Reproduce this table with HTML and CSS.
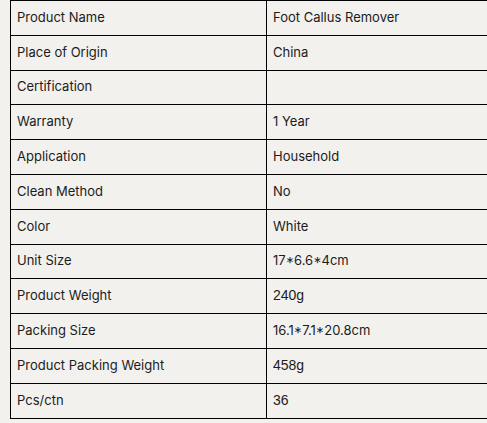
FILE: index.html
```html
<!DOCTYPE html>
<html lang="en">
<head>
<meta charset="utf-8">
<title>Product Specifications</title>
<link rel="stylesheet" href="styles.css">
</head>
<body>
<table class="spec">
  <colgroup>
    <col class="col-key">
    <col class="col-val">
  </colgroup>
  <tbody>
    <tr><td class="key">Product Name</td><td class="val">Foot Callus Remover</td></tr>
    <tr><td class="key">Place of Origin</td><td class="val">China</td></tr>
    <tr><td class="key">Certification</td><td class="val"></td></tr>
    <tr><td class="key">Warranty</td><td class="val">1 Year</td></tr>
    <tr><td class="key">Application</td><td class="val">Household</td></tr>
    <tr><td class="key">Clean Method</td><td class="val">No</td></tr>
    <tr><td class="key">Color</td><td class="val">White</td></tr>
    <tr><td class="key">Unit Size</td><td class="val">17*6.6*4cm</td></tr>
    <tr><td class="key">Product Weight</td><td class="val"><span class="plain">240g</span></td></tr>
    <tr><td class="key">Packing Size</td><td class="val">16.1*7.1*20.8cm</td></tr>
    <tr><td class="key">Product Packing Weight</td><td class="val"><span class="plain">458g</span></td></tr>
    <tr><td class="key">Pcs/ctn</td><td class="val"><span class="plain">36</span></td></tr>
  </tbody>
</table>
</body>
</html>
```
FILE: styles.css
```css
html, body {
  margin: 0;
  padding: 0;
  overflow: hidden;
  background: #f2f1ee;
}

body {
  padding-left: 10px;
  font-family: "Inter", "Liberation Sans", sans-serif;
  font-size: 13px;
  color: #1c1c1c;
}

.spec {
  border-collapse: collapse;
  width: 477px;
  table-layout: fixed;
}

.col-key {
  width: 256px;
}

.spec tr {
  height: 34.8px;
}

.spec td {
  border: 1px solid #000;
  padding: 0 6px 2px;
  vertical-align: middle;
  white-space: nowrap;
}

.spec td.val {
  border-right: none;
}

.plain {
  font-family: "Liberation Sans", Arial, sans-serif;
  font-size: 14px;
}
```
